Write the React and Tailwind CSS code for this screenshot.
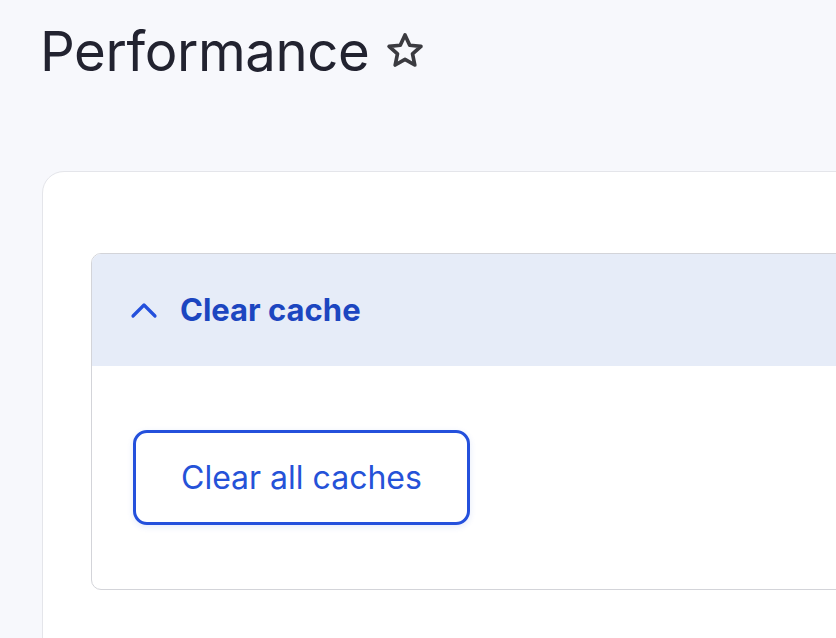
import { useState } from 'react';

function StarIcon() {
  return (
    <svg className="w-[42px] h-[42px]" viewBox="0 0 24 24" fill="none" stroke="#3b3b40" strokeWidth="2.1" strokeLinejoin="round">
      <path d="M12 2.8l2.7 5.9 6.4.7-4.8 4.3 1.3 6.3L12 16.8 6.4 20l1.3-6.3-4.8-4.3 6.4-.7z" />
    </svg>
  );
}

function ChevronUp() {
  return (
    <svg className="w-[28px] h-[18px]" viewBox="0 0 28 18" fill="none" stroke="#2450dc" strokeWidth="3.2" strokeLinecap="round" strokeLinejoin="round">
      <path d="M3 15L14 4l11 11" />
    </svg>
  );
}

export default function App() {
  const [open, setOpen] = useState(true);

  return (
    <div className="h-[638px] w-[836px] overflow-hidden bg-[#f7f8fc] font-['Inter',sans-serif]">
      {/* cabeçalho da página */}
      <div className="flex items-center gap-[15px] pl-[40px] pt-[2px] h-[100px]">
        <h1 className="text-[54.5px] leading-none font-normal tracking-[-0.4px] text-[#222330]">Performance</h1>
        <StarIcon />
      </div>

      <div className="ml-[42px] mt-[71px] w-[900px] h-[600px] bg-white border border-[#e4e5ea] rounded-[22px] pl-[48px] pt-[81px]">
        <div className="border border-[#d3d4d9] rounded-[10px] bg-white">
          <button
            onClick={() => setOpen(!open)}
            className="w-full h-[112px] flex items-center gap-[22px] pl-[38px] bg-[#e6ecf8] rounded-t-[9px] text-left"
          >
            <ChevronUp />
            <span className="text-[31px] font-bold text-[#1c46c0]">Clear cache</span>
          </button>
          {open && (
            <div className="pl-[41px] pt-[64px] pb-[64px]">
              <button className="h-[95px] px-[45px] border-[3px] border-[#2450dc] rounded-[14px] shadow-[0_2px_6px_rgba(36,80,220,0.12)] text-[32px] text-[#2552d8] bg-white">
                Clear all caches
              </button>
            </div>
          )}
        </div>
      </div>
    </div>
  );
}
